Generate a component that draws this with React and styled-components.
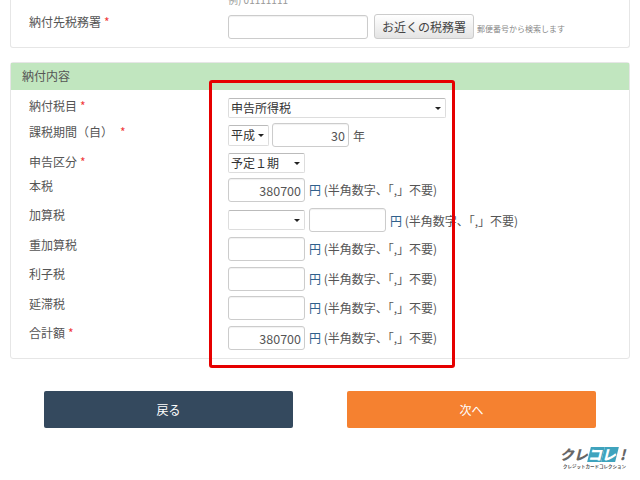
import styled, { createGlobalStyle } from 'styled-components'

const Global = createGlobalStyle`
  html, body { margin: 0; padding: 0; background: #fff; }
  body {
    width: 640px;
    height: 480px;
    overflow: hidden;
    font-family: "Noto Sans CJK JP", "Open Sans", sans-serif;
    font-size: 12px;
    color: #555;
  }
`

const Page = styled.div`
  position: relative;
  width: 640px;
  height: 480px;
  overflow: hidden;
`

const Panel = styled.section`
  box-sizing: border-box;
  width: 620px;
  margin: 0 0 0 10px;
  background: #fff;
  border: 1px solid #e6e6e6;
  border-radius: 3px;
`

const TopPanel = styled(Panel)`
  height: 58px;
  margin-top: -10px;
  border-top: none;
  padding: 0 18px;
`

const Hint = styled.div`
  margin-left: 199px;
  height: 15px;
  padding-top: 3px;
  font-size: 10px;
  line-height: 14px;
  color: #999;
`

const OfficeRow = styled.div`
  display: flex;
  height: 25px;
  margin-top: 7px;
`

const Label = styled.div`
  width: 199px;
  flex: none;
  margin-top: ${p => -(p.$lift || 0)}px;
  line-height: 18px;
  color: #555;
`

const Required = styled.span`
  color: #f03a3a;
  margin-left: ${p => p.$gap || 3}px;
`

const Input = styled.input`
  box-sizing: border-box;
  width: ${p => p.$w || 77}px;
  height: 24px;
  flex: none;
  margin: 0 0 0 ${p => p.$gap || 0}px;
  padding: 0 3px;
  border: 1px solid #ccc;
  border-radius: 3px;
  background: #fff;
  box-shadow: inset 0 1px 1px rgba(0, 0, 0, 0.06);
  font: 12.5px "Noto Sans CJK JP", sans-serif;
  color: #555;
  text-align: right;
  outline: none;
`

const SearchButton = styled.button`
  box-sizing: border-box;
  width: 100px;
  height: 25px;
  margin: -1px 0 0 6px;
  padding: 0;
  border: 1px solid #ccc;
  border-radius: 3px;
  background: linear-gradient(#fff, #e4e4e4);
  font: 12px "Noto Sans CJK JP", sans-serif;
  color: #444;
`

const SearchNote = styled.span`
  margin: 6px 0 0 3px;
  font-size: 8px;
  line-height: 16px;
  color: #888;
`

const FormPanel = styled(Panel)`
  height: 297px;
  margin-top: 14px;
`

const PanelHead = styled.h2`
  box-sizing: border-box;
  height: 27px;
  margin: 0;
  padding-left: 11px;
  background: #c1e6bf;
  font-size: 12px;
  font-weight: normal;
  line-height: 26px;
  color: #555;
`

const FormBody = styled.div`
  padding: 8px 18px 0;
`

const Row = styled.div`
  display: flex;
  height: ${p => p.$h}px;
`

const Controls = styled.div`
  display: flex;
  align-items: ${p => (p.$middle ? 'center' : 'flex-start')};
  height: 24px;
  white-space: nowrap;
`

const SelectWrap = styled.div`
  position: relative;
  flex: none;
  width: ${p => p.$w}px;
  height: ${p => p.$tall || 20}px;

  &::after {
    content: '';
    position: absolute;
    right: 5px;
    top: ${p => ((p.$tall || 20) - 3) / 2}px;
    border: 3px solid transparent;
    border-top: 3px solid #222;
    border-bottom: none;
    pointer-events: none;
  }
`

const Select = styled.select`
  appearance: none;
  box-sizing: border-box;
  display: block;
  width: 100%;
  height: 100%;
  margin: 0;
  padding: 0 2px 2px;
  border: 1px solid #ddd;
  border-top-color: #bbb;
  border-radius: 2px;
  background: #fff;
  font: 12px "Noto Sans CJK JP", sans-serif;
  color: #333;
  outline: none;
`

const Unit = styled.span`
  margin-left: 4px;
  font-size: 12px;
  line-height: 23px;
  color: #555;
`

const Yen = styled.span`
  color: #30608c;
`

const Actions = styled.div`
  display: flex;
  gap: 54px;
  margin: 32px 0 0 44px;
`

const ActionButton = styled.button`
  width: 249px;
  height: 37px;
  padding: 0;
  border: none;
  border-radius: 2px;
  background: ${p => p.$bg};
  font: 12px "Noto Sans CJK JP", sans-serif;
  color: #fff;
`

const Highlight = styled.div`
  position: absolute;
  box-sizing: border-box;
  left: 209px;
  top: 80px;
  width: 246px;
  height: 288px;
  border: 3px solid #e60000;
  border-radius: 3px;
  pointer-events: none;
`

const Logo = styled.div`
  position: absolute;
  left: 561px;
  top: 447px;
  width: 70px;
  height: 23px;
`

const LogoWord = styled.div`
  display: flex;
  height: 15px;
`

const LogoChar = styled.span`
  display: block;
  width: 14px;
  height: 15px;
  transform: skewX(-14deg);
  background: ${p => (p.$teal ? '#3fa3bd' : 'transparent')};
  font: 900 14px/15px "Noto Sans CJK JP", sans-serif;
  text-align: center;
  color: ${p => (p.$teal ? '#fff' : '#666')};
`

const LogoSub = styled.div`
  margin: 1px 0 0 2px;
  font: bold 4.5px/6px "Noto Sans CJK JP", sans-serif;
  color: #555;
  white-space: nowrap;
`

const YEN_NOTE = ' (半角数字、「,」不要)'

const Amount = ({ value }) => (
  <Controls>
    <Input defaultValue={value} />
    <Unit><Yen>円</Yen>{YEN_NOTE}</Unit>
  </Controls>
)

export default function App () {
  return (
    <Page>
      <Global />
      <TopPanel>
        <Hint>例) 01111111</Hint>
        <OfficeRow>
          <Label $lift={2}>納付先税務署<Required>*</Required></Label>
          <Input $w={140} />
          <SearchButton>お近くの税務署</SearchButton>
          <SearchNote>郵便番号から検索します</SearchNote>
        </OfficeRow>
      </TopPanel>

      <FormPanel>
        <PanelHead>納付内容</PanelHead>
        <FormBody>
          <Row $h={25}>
            <Label $lift={1}>納付税目<Required>*</Required></Label>
            <SelectWrap $w={218}>
              <Select defaultValue='申告所得税'><option>申告所得税</option></Select>
            </SelectWrap>
          </Row>
          <Row $h={30}>
            <Label>課税期間（自）<Required $gap={7}>*</Required></Label>
            <Controls $middle>
              <SelectWrap $w={41} $tall={21}>
                <Select defaultValue='平成'><option>平成</option></Select>
              </SelectWrap>
              <Input $gap={3} defaultValue='30' />
              <Unit>年</Unit>
            </Controls>
          </Row>
          <Row $h={25}>
            <Label>申告区分<Required>*</Required></Label>
            <SelectWrap $w={77}>
              <Select defaultValue='予定１期'><option>予定１期</option></Select>
            </SelectWrap>
          </Row>
          <Row $h={30}>
            <Label $lift={1}>本税</Label>
            <Amount value='380700' />
          </Row>
          <Row $h={29}>
            <Label $lift={2}>加算税</Label>
            <Controls $middle>
              <SelectWrap $w={77}>
                <Select><option></option></Select>
              </SelectWrap>
              <Input $gap={4} />
              <Unit><Yen>円</Yen>{YEN_NOTE}</Unit>
            </Controls>
          </Row>
          <Row $h={30}>
            <Label $lift={1}>重加算税</Label>
            <Amount />
          </Row>
          <Row $h={29}>
            <Label $lift={2}>利子税</Label>
            <Amount />
          </Row>
          <Row $h={30}>
            <Label $lift={1}>延滞税</Label>
            <Amount />
          </Row>
          <Row $h={30}>
            <Label $lift={2}>合計額<Required>*</Required></Label>
            <Amount value='380700' />
          </Row>
        </FormBody>
      </FormPanel>

      <Actions>
        <ActionButton $bg='#34495e'>戻る</ActionButton>
        <ActionButton $bg='#f58130'>次へ</ActionButton>
      </Actions>

      <Highlight />

      <Logo>
        <LogoWord>
          <LogoChar>ク</LogoChar>
          <LogoChar>レ</LogoChar>
          <LogoChar $teal>コ</LogoChar>
          <LogoChar $teal>レ</LogoChar>
          <LogoChar>!</LogoChar>
        </LogoWord>
        <LogoSub>クレジットカードコレクション</LogoSub>
      </Logo>
    </Page>
  )
}
